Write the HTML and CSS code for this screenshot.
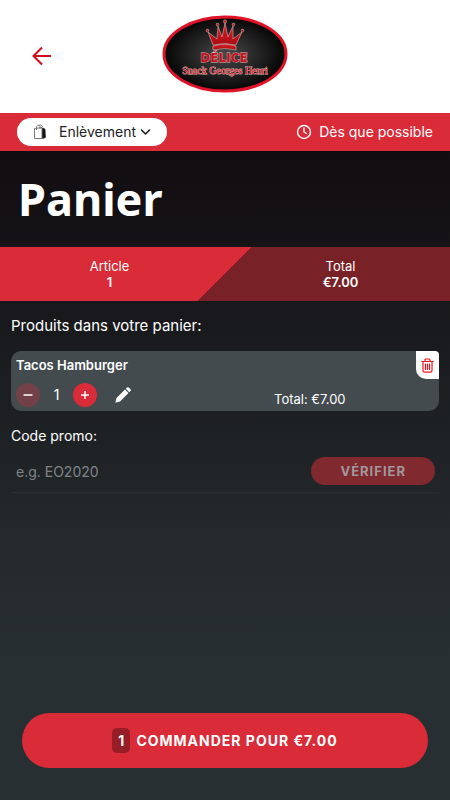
FILE: index.html
```html
<!DOCTYPE html>
<html lang="fr">
<head>
<meta charset="utf-8">
<meta name="viewport" content="width=device-width, initial-scale=1">
<title>Panier</title>
<link rel="stylesheet" href="styles.css">
</head>
<body>
<header class="header">
  <button class="back" type="button" aria-label="Retour">
    <svg width="20" height="20" viewBox="0 0 20 20" fill="none" stroke="#d20a1c" stroke-width="2"><path d="M19 10H2M10 1.500L1.500 10L10 18.500"/></svg>
  </button>
  <svg class="logo" width="126" height="78" viewBox="0 0 126 78" role="img" aria-label="Délice Snack Georges Henri">
    <defs>
      <radialGradient id="oval"><stop offset="0" stop-color="#4a4a4a"/><stop offset=".55" stop-color="#242424"/><stop offset="1" stop-color="#050505"/></radialGradient>
      <linearGradient id="crown" x2="0" y2="1"><stop offset="0" stop-color="#e51b24"/><stop offset="1" stop-color="#a80d13"/></linearGradient>
    </defs>
    <ellipse cx="63" cy="39" rx="61" ry="37" fill="url(#oval)" stroke="#df1228" stroke-width="3"/>
    <g fill="url(#crown)" stroke="#d9b5b5" stroke-width=".6" stroke-linejoin="round">
      <path d="M51 30L46 17L55 24L56 11L60 22L63 8L66 22L71 11L71 24L80 17L74 30Q63 27 51 30Z"/>
      <path d="M51 31Q63 27.500 74 31L74 35Q63 32 51 35Z"/>
      <circle cx="45.500" cy="15.500" r="1.300"/><circle cx="55.500" cy="9.500" r="1.300"/><circle cx="63" cy="6.500" r="1.600"/><circle cx="71.500" cy="9.500" r="1.300"/><circle cx="80.500" cy="15.500" r="1.300"/>
    </g>
    <g text-anchor="middle" fill="#c8101c" stroke="#e3bcbc" stroke-width=".8" paint-order="stroke">
      <text class="logo-name" x="62" y="47">DÉLICE</text>
      <text class="logo-sub" x="63" y="59">Snack Georges Henri</text>
    </g>
  </svg>
</header>

<div class="options">
  <label class="mode">
    <svg width="14" height="16" viewBox="0 0 14 16" fill="none" stroke="#777" stroke-width="1"><path d="M1.500 4.500L9 3.500V14.500H1.500Z" fill="#fff"/><path d="M9.500 4L12 5L12.500 13.500L9.500 14.500Z" fill="#161616" stroke="#161616" stroke-width=".6"/><path d="M3.500 6V3C3.500 1 6.500 .5 7 2.500V5M5.500 2C6.500 .5 9 .5 9.500 3"/></svg>
    <select class="mode-select" aria-label="Mode de commande"><option>Enlèvement</option></select>
    <svg class="chevron" width="11" height="8" viewBox="0 0 11 8" fill="none" stroke="#1c1c1c" stroke-width="1.600" stroke-linecap="round" stroke-linejoin="round"><path d="M1.500 2L5.500 6L9.500 2"/></svg>
  </label>
  <div class="when">
    <svg width="16" height="16" viewBox="0 0 16 16" fill="none" stroke="#fff" stroke-width="1.400" stroke-linecap="round" stroke-linejoin="round"><circle cx="8" cy="8" r="6.500"/><path d="M8 4V8L10.500 9.500"/></svg>
    <span>Dès que possible</span>
  </div>
</div>

<main class="content">
  <h1 class="title">Panier</h1>
  <div class="summary">
    <div class="stat"><span>Article</span><strong>1</strong></div>
    <div class="stat"><span>Total</span><strong>€7.00</strong></div>
  </div>

  <section class="basket">
    <h2 class="heading">Produits dans votre panier:</h2>
    <article class="item">
      <h3 class="item-name">Tacos Hamburger</h3>
      <div class="item-row">
        <div class="quantity">
          <button class="round muted" type="button" aria-label="Retirer">
            <svg width="10" height="10" viewBox="0 0 10 10" stroke="#fff" stroke-width="1.500"><path d="M.5 5H9.500"/></svg>
          </button>
          <span class="count">1</span>
          <button class="round" type="button" aria-label="Ajouter">
            <svg width="10" height="10" viewBox="0 0 10 10" stroke="#fff" stroke-width="1.500"><path d="M1 5H9M5 1V9"/></svg>
          </button>
          <button class="edit" type="button" aria-label="Modifier">
            <svg width="16" height="16" viewBox="0 0 16 16" fill="#fff"><path d="M10 2.500L13.500 6L5 14.500L.3 15.700L1.500 11Z"/><path d="M10.800 1.700L12 .5Q13 -.2 14 .7L15.300 2Q16.200 3 15.500 4L14.300 5.200Z"/></svg>
          </button>
        </div>
        <span class="item-total">Total: €7.00</span>
      </div>
      <button class="delete" type="button" aria-label="Supprimer">
        <svg width="13" height="15" viewBox="0 0 13 15" fill="none" stroke="#f01418" stroke-width="1.200" stroke-linecap="round" stroke-linejoin="round"><path d="M.7 3.500H12.300M4 3.500V2Q4 1 5 1H8Q9 1 9 2V3.500M2 3.500V12.500Q2 14.200 3.700 14.200H9.300Q11 14.200 11 12.500V3.500M4.500 6V11.500M6.500 6V11.500M8.500 6V11.500"/></svg>
      </button>
    </article>

    <form class="promo">
      <label class="label" for="code">Code promo:</label>
      <div class="promo-row">
        <input class="code" id="code" type="text" placeholder="e.g. EO2020">
        <button class="verify" type="button">VÉRIFIER</button>
      </div>
    </form>
  </section>

  <button class="order" type="button"><span class="badge">1</span><span>COMMANDER POUR €7.00</span></button>
</main>
</body>
</html>
```

FILE: styles.css
```css
:root {
  --red: #da2b38;
}

* {
  box-sizing: border-box;
}

body {
  margin: 0;
  min-height: 100vh;
  display: flex;
  flex-direction: column;
  font: 14px/20px Inter, "Liberation Sans", sans-serif;
  color: #fff;
  background: #282f32;
}

button,
input,
select {
  font: inherit;
  color: inherit;
  border: 0;
  padding: 0;
  margin: 0;
  background: none;
}

button {
  cursor: pointer;
}

svg {
  display: block;
  flex: none;
}

h1,
h2,
h3 {
  margin: 0;
}

.header {
  display: grid;
  grid-template-columns: 1fr auto 1fr;
  align-items: center;
  padding: 15px 32px 20px;
  background: #fff;
}

.back {
  justify-self: start;
  padding-top: 4px;
}

.logo-name {
  font: 700 12px "DejaVu Sans", sans-serif;
}

.logo-sub {
  font: 10px "Liberation Serif", serif;
}

.options {
  display: flex;
  justify-content: space-between;
  align-items: center;
  padding: 5px 17px;
  background: var(--red);
}

.mode {
  display: flex;
  align-items: center;
  height: 28px;
  padding: 0 16px;
  border-radius: 14px;
  background: #fff;
  color: #222;
}

.mode-select {
  appearance: none;
  margin: 0 4px 0 12px;
}

.when {
  display: flex;
  align-items: center;
  gap: 7px;
}

.content {
  flex: 1;
  display: flex;
  flex-direction: column;
  background: linear-gradient(#110c10, #1a1b1e 30%, #22272a 55%, #282f32 80%);
}

.title {
  padding: 16px 18px;
  font: 700 45px/64px "Noto Sans", "Open Sans", sans-serif;
}

.summary {
  display: grid;
  grid-template-columns: 1fr 1fr;
  padding: 11px 0;
  background: linear-gradient(135deg, var(--red) 50%, #782228 50%);
}

.stat {
  display: flex;
  flex-direction: column;
  padding-right: 6px;
  text-align: center;
  font-size: 13px;
  line-height: 16px;
}

.stat + .stat {
  padding: 0 0 0 6px;
}

.stat strong {
  font-weight: 600;
}

.basket {
  padding: 15px 11px;
}

.heading {
  font-size: 15px;
  font-weight: 400;
}

.label {
  display: block;
}

.item {
  position: relative;
  margin: 15px 0;
  padding: 4px 5px;
  border-radius: 10px;
  background: #434b4f;
}

.item-name {
  font-size: 13px;
  font-weight: 600;
  line-height: 20px;
}

.item-row {
  display: flex;
  align-items: end;
  margin-top: 8px;
}

.quantity {
  flex: 258;
  display: flex;
  align-items: center;
}

.round {
  display: grid;
  place-items: center;
  width: 24px;
  height: 24px;
  border-radius: 50%;
  background: var(--red);
}

.muted {
  background: #724148;
}

.count {
  width: 33px;
  text-align: center;
}

.edit {
  margin-left: 18px;
}

.item-total {
  flex: 160;
  font-size: 13px;
  line-height: 16px;
}

.delete {
  position: absolute;
  top: 0;
  right: 0;
  display: grid;
  place-items: center;
  width: 23px;
  height: 28px;
  border-radius: 0 4px 0 10px;
  background: #fff;
}

.promo-row {
  display: flex;
  align-items: center;
  margin-top: 7px;
  padding: 4px 4px 7px 5px;
  border-bottom: 1px solid #2b3033;
}

.code {
  flex: 1;
  min-width: 0;
  height: 28px;
  outline: 0;
}

.code::placeholder {
  color: #818487;
  opacity: 1;
}

.verify {
  height: 28px;
  padding: 0 29px;
  border-radius: 14px;
  background: #80292f;
  color: #a1989b;
  font-size: 13px;
  font-weight: 700;
  letter-spacing: 1px;
}

.order {
  display: flex;
  justify-content: center;
  align-items: center;
  gap: 6px;
  height: 55px;
  margin: auto 22px 32px;
  border-radius: 28px;
  background: var(--red);
  font-weight: 700;
  letter-spacing: 1px;
}

.badge {
  width: 18px;
  border-radius: 5px;
  background: #971d27;
  line-height: 25px;
  letter-spacing: 0;
}
```
